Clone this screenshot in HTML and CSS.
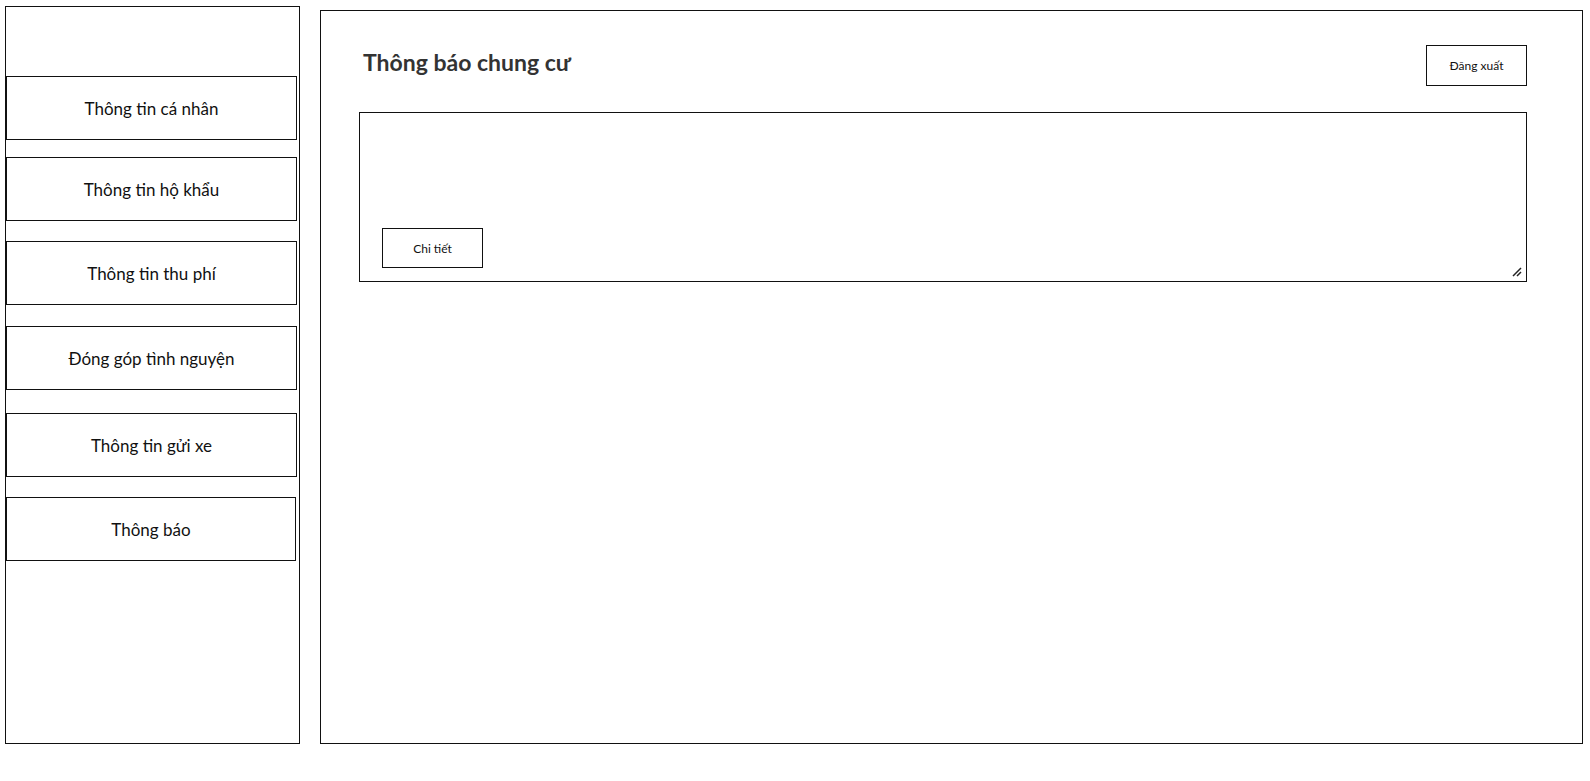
FILE: index.html
```html
<!DOCTYPE html>
<html lang="vi">
<head>
<meta charset="utf-8">
<title>Thông báo chung cư</title>
<link rel="stylesheet" href="styles.css">
</head>
<body>
<div class="page">
  <nav class="sidebar">
    <a class="nav-item">Thông tin cá nhân</a>
    <a class="nav-item">Thông tin hộ khẩu</a>
    <a class="nav-item">Thông tin thu phí</a>
    <a class="nav-item">Đóng góp tình nguyện</a>
    <a class="nav-item">Thông tin gửi xe</a>
    <a class="nav-item nav-item-last">Thông báo</a>
  </nav>
  <main class="main">
    <header class="header">
      <h1 class="title">Thông báo chung cư</h1>
      <button class="btn">Đăng xuất</button>
    </header>
    <section class="card">
      <button class="btn">Chi tiết</button>
      <svg class="grip" width="11" height="11" viewBox="0 0 11 11">
        <path d="M10 2 L2 10 M10 6 L6 10" stroke="#222" stroke-width="1.5" fill="none"/>
      </svg>
    </section>
  </main>
</div>
</body>
</html>
```
FILE: styles.css
```css
* { box-sizing: border-box; }
html, body { margin: 0; padding: 0; background: #fff; }
body {
  font-family: "Lato", "Noto Sans", sans-serif;
  color: #111;
}
.page {
  display: flex;
  align-items: flex-start;
  padding-left: 5px;
}
.sidebar {
  margin-top: 6px;
  width: 295px;
  height: 738px;
  border: 1px solid #111;
  display: flex;
  flex-direction: column;
  padding-top: 69px;
}
.nav-item {
  width: 291px;
  height: 64px;
  flex-shrink: 0;
  border: 1px solid #111;
  display: flex;
  align-items: center;
  justify-content: center;
  font-size: 17px;
  color: #111;
}
.nav-item:nth-child(2) { margin-top: 17px; }
.nav-item:nth-child(3) { margin-top: 20px; }
.nav-item:nth-child(4) { margin-top: 21px; }
.nav-item:nth-child(5) { margin-top: 23px; }
.nav-item:nth-child(6) { margin-top: 20px; }
.nav-item-last { width: 290px; }
.main {
  margin-top: 10px;
  margin-left: 20px;
  width: 1263px;
  height: 734px;
  border: 1px solid #111;
  padding: 34px 0 0 38px;
}
.header {
  width: 1168px;
  height: 41px;
  display: flex;
  align-items: center;
  justify-content: space-between;
}
.title {
  margin: 0 0 8px 4px;
  font-size: 23px;
  font-weight: 700;
  color: #333;
}
.btn {
  width: 101px;
  height: 41px;
  border: 1px solid #111;
  background: #fff;
  font-family: "Lato", "Noto Sans", sans-serif;
  font-size: 12px;
  color: #111;
  padding: 0;
}
.card {
  position: relative;
  margin-top: 26px;
  width: 1168px;
  height: 170px;
  border: 1px solid #111;
  display: flex;
  flex-direction: column;
  justify-content: flex-end;
  align-items: flex-start;
  padding: 0 0 13px 22px;
}
.card .btn { height: 40px; }
.grip {
  position: absolute;
  right: 4px;
  bottom: 4px;
}
```
